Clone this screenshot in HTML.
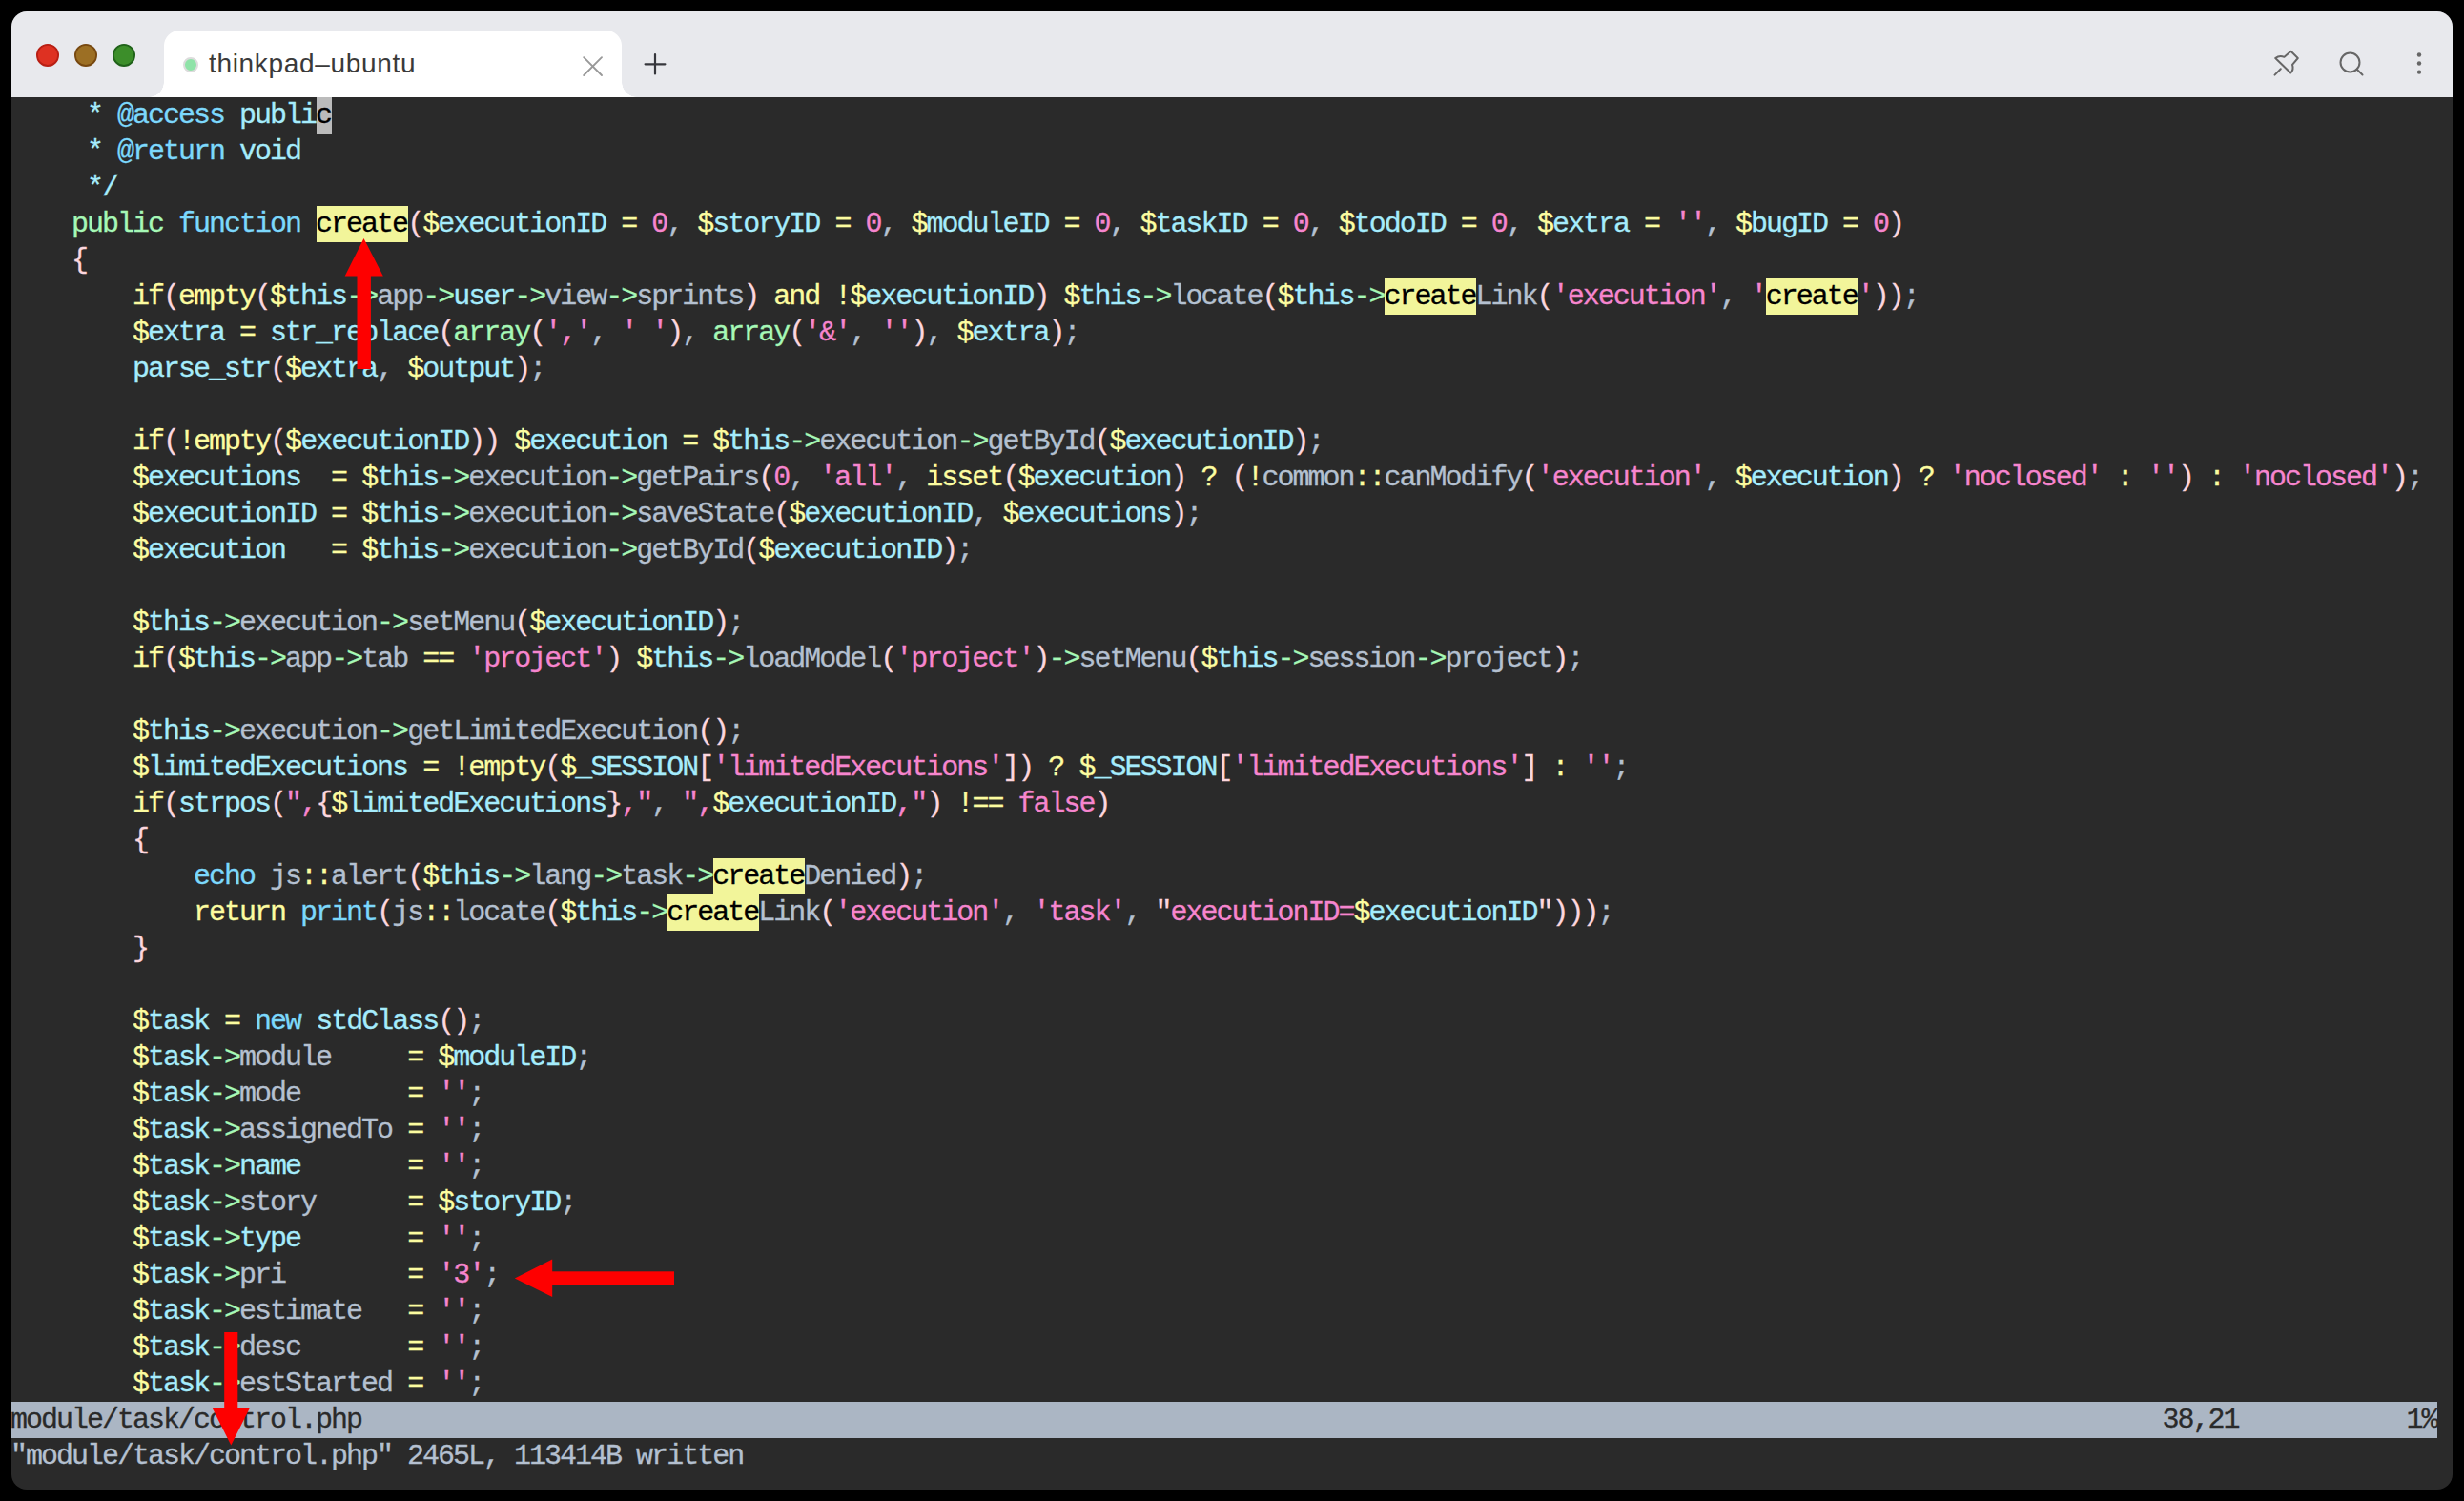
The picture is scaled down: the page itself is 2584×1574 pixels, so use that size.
<!DOCTYPE html>
<html><head><meta charset="utf-8"><style>
html,body{margin:0;padding:0;}
body{width:2584px;height:1574px;background:#000;overflow:hidden;position:relative;}
.win{position:absolute;left:12px;top:12px;width:2560px;height:1550px;border-radius:16px;overflow:hidden;background:#2a2a2a;}
.tb{position:absolute;left:0;top:0;width:2560px;height:90px;background:#e8e9ed;}
.tab{position:absolute;left:160px;top:20px;width:480px;height:70px;background:#fff;border-radius:16px 16px 0 0;}
.tab:before,.tab:after{content:"";position:absolute;bottom:0;width:16px;height:16px;}
.tab:before{left:-16px;background:radial-gradient(circle at 0 0,transparent 15.5px,#fff 16px);}
.tab:after{right:-16px;background:radial-gradient(circle at 100% 0,transparent 15.5px,#fff 16px);}
.gdot{position:absolute;left:20px;top:27.8px;width:12px;height:12px;border-radius:50%;background:#8fe3a8;border:2px solid #dcdcdc;}
.ttl{position:absolute;left:47px;top:15.2px;font:28px/40px "Liberation Sans",sans-serif;color:#3a3a3a;white-space:pre;letter-spacing:0.68px;}
.code{position:absolute;left:0;top:90px;width:2560px;height:1460px;}
.ln,.sl,.cl{position:absolute;left:-1px;height:38px;white-space:pre;font-family:"Liberation Mono",monospace;font-size:30px;line-height:38px;letter-spacing:-2px;color:#c8ccd4;-webkit-text-stroke:0.3px currentColor;}
.hl{position:absolute;height:38px;background:#f2f59a;}
.cur{position:absolute;height:38px;background:#bbbbbb;}
i{font-style:normal;}
.y{color:#fcfca0}
.c{color:#a5ecfc}
.b{color:#7cd8fc}
.g{color:#a6f8b6}
.p{color:#fcd6de}
.m{color:#f685ce}
.s{color:#b4c0d0}
.k{color:#a5ecfc}
.H{color:#000}
.K{color:#000}
.status{position:absolute;left:0;top:1368px;width:2544px;height:38px;background:#abb6c4;}
.sl{top:1368px;color:#2a2a2a;}
.cl{top:1406px;color:#b4c0d0;}
.arrow{position:absolute;left:0;top:0;}

</style></head><body>
<div class="win">
 <div class="tb">
  <svg style="position:absolute;left:0;top:0" width="140" height="90" viewBox="0 0 140 90"><circle cx="38" cy="45.9" r="11.1" fill="#de3122" stroke="#b81f14" stroke-width="1.8"/><circle cx="78" cy="45.9" r="11.1" fill="#9c6f24" stroke="#774810" stroke-width="1.8"/><circle cx="118" cy="45.9" r="11.1" fill="#3c8e2a" stroke="#20621a" stroke-width="1.8"/></svg>
  <div class="tab"><div class="gdot"></div><div class="ttl">thinkpad–ubuntu</div>
   <svg style="position:absolute;left:437.5px;top:26px" width="24" height="24" viewBox="0 0 24 24"><path d="M2.2 2.2L21 21M21 2.2L2.2 21" stroke="#999" stroke-width="1.9" stroke-linecap="round" fill="none"/></svg>
  </div>
  <svg style="position:absolute;left:662px;top:42px" width="26" height="26" viewBox="0 0 26 26"><path d="M13 3V23.5M2.6 13.3H23.4" stroke="#36373c" stroke-width="2.2" stroke-linecap="round" fill="none"/></svg>
  <svg style="position:absolute;left:2370px;top:38px" width="32" height="32" viewBox="0 0 32 32"><path d="M20.5 3.8L27.8 11L22 17.8C23.2 21 22.4 24.2 20.2 26.5L4.2 11C7 8.8 10.5 8.5 13.5 9.8Z M9.8 22.2L3.5 28.6" stroke="#666" stroke-width="2" stroke-linejoin="round" stroke-linecap="round" fill="none"/></svg>
  <svg style="position:absolute;left:2436px;top:38px" width="32" height="32" viewBox="0 0 32 32"><circle cx="16.5" cy="15.5" r="10" stroke="#666" stroke-width="2" fill="none"/><path d="M23.5 22.5L29.5 28.5" stroke="#666" stroke-width="2" stroke-linecap="round"/></svg>
  <svg style="position:absolute;left:2515px;top:40px" width="20" height="40" viewBox="0 0 20 40"><circle cx="10" cy="5.5" r="2.2" fill="#666"/><circle cx="10" cy="14.5" r="2.2" fill="#666"/><circle cx="10" cy="23.6" r="2.2" fill="#666"/></svg>
 </div>
 <div class="code">
<div class="cur" style="left:320px;top:0px;width:16px"></div>
<div class="hl" style="left:320px;top:114px;width:96px"></div>
<div class="hl" style="left:1440px;top:190px;width:96px"></div>
<div class="hl" style="left:1840px;top:190px;width:96px"></div>
<div class="hl" style="left:736px;top:798px;width:96px"></div>
<div class="hl" style="left:688px;top:836px;width:96px"></div>
<div class="ln" style="top:0px">     <i class="k">* </i><i class="b">@access</i><i class="k"> publi</i><i class="K">c</i></div>
<div class="ln" style="top:38px">     <i class="k">* </i><i class="b">@return</i><i class="k"> void</i></div>
<div class="ln" style="top:76px">     <i class="k">*/</i></div>
<div class="ln" style="top:114px">    <i class="g">public</i> <i class="b">function</i> <i class="H">create</i><i class="p">(</i><i class="y">$</i><i class="c">executionID</i> <i class="y">=</i> <i class="m">0</i><i class="s">,</i> <i class="y">$</i><i class="c">storyID</i> <i class="y">=</i> <i class="m">0</i><i class="s">,</i> <i class="y">$</i><i class="c">moduleID</i> <i class="y">=</i> <i class="m">0</i><i class="s">,</i> <i class="y">$</i><i class="c">taskID</i> <i class="y">=</i> <i class="m">0</i><i class="s">,</i> <i class="y">$</i><i class="c">todoID</i> <i class="y">=</i> <i class="m">0</i><i class="s">,</i> <i class="y">$</i><i class="c">extra</i> <i class="y">=</i> <i class="m">&#x27;&#x27;</i><i class="s">,</i> <i class="y">$</i><i class="c">bugID</i> <i class="y">=</i> <i class="m">0</i><i class="p">)</i></div>
<div class="ln" style="top:152px">    <i class="p">{</i></div>
<div class="ln" style="top:190px">        <i class="y">if</i><i class="p">(</i><i class="y">empty</i><i class="p">(</i><i class="y">$</i><i class="c">this</i><i class="g">-&gt;</i><i class="s">app</i><i class="g">-&gt;</i><i class="c">user</i><i class="g">-&gt;</i><i class="s">view</i><i class="g">-&gt;</i><i class="s">sprints</i><i class="p">)</i> <i class="y">and</i> <i class="y">!$</i><i class="c">executionID</i><i class="p">)</i> <i class="y">$</i><i class="c">this</i><i class="g">-&gt;</i><i class="s">locate</i><i class="p">(</i><i class="y">$</i><i class="c">this</i><i class="g">-&gt;</i><i class="H">create</i><i class="s">Link</i><i class="p">(</i><i class="m">&#x27;execution&#x27;</i><i class="s">,</i> <i class="m">&#x27;</i><i class="H">create</i><i class="m">&#x27;</i><i class="p">))</i><i class="s">;</i></div>
<div class="ln" style="top:228px">        <i class="y">$</i><i class="c">extra</i> <i class="y">=</i> <i class="c">str_replace</i><i class="p">(</i><i class="g">array</i><i class="p">(</i><i class="m">&#x27;,&#x27;</i><i class="s">,</i> <i class="m">&#x27; &#x27;</i><i class="p">)</i><i class="s">,</i> <i class="g">array</i><i class="p">(</i><i class="m">&#x27;&amp;&#x27;</i><i class="s">,</i> <i class="m">&#x27;&#x27;</i><i class="p">)</i><i class="s">,</i> <i class="y">$</i><i class="c">extra</i><i class="p">)</i><i class="s">;</i></div>
<div class="ln" style="top:266px">        <i class="c">parse_str</i><i class="p">(</i><i class="y">$</i><i class="c">extra</i><i class="s">,</i> <i class="y">$</i><i class="c">output</i><i class="p">)</i><i class="s">;</i></div>
<div class="ln" style="top:304px"></div>
<div class="ln" style="top:342px">        <i class="y">if</i><i class="p">(</i><i class="y">!empty</i><i class="p">(</i><i class="y">$</i><i class="c">executionID</i><i class="p">))</i> <i class="y">$</i><i class="c">execution</i> <i class="y">=</i> <i class="y">$</i><i class="c">this</i><i class="g">-&gt;</i><i class="s">execution</i><i class="g">-&gt;</i><i class="s">getById</i><i class="p">(</i><i class="y">$</i><i class="c">executionID</i><i class="p">)</i><i class="s">;</i></div>
<div class="ln" style="top:380px">        <i class="y">$</i><i class="c">executions</i>  <i class="y">=</i> <i class="y">$</i><i class="c">this</i><i class="g">-&gt;</i><i class="s">execution</i><i class="g">-&gt;</i><i class="s">getPairs</i><i class="p">(</i><i class="m">0</i><i class="s">,</i> <i class="m">&#x27;all&#x27;</i><i class="s">,</i> <i class="y">isset</i><i class="p">(</i><i class="y">$</i><i class="c">execution</i><i class="p">)</i> <i class="y">?</i> <i class="p">(</i><i class="y">!</i><i class="s">common</i><i class="y">::</i><i class="s">canModify</i><i class="p">(</i><i class="m">&#x27;execution&#x27;</i><i class="s">,</i> <i class="y">$</i><i class="c">execution</i><i class="p">)</i> <i class="y">?</i> <i class="m">&#x27;noclosed&#x27;</i> <i class="y">:</i> <i class="m">&#x27;&#x27;</i><i class="p">)</i> <i class="y">:</i> <i class="m">&#x27;noclosed&#x27;</i><i class="p">)</i><i class="s">;</i></div>
<div class="ln" style="top:418px">        <i class="y">$</i><i class="c">executionID</i> <i class="y">=</i> <i class="y">$</i><i class="c">this</i><i class="g">-&gt;</i><i class="s">execution</i><i class="g">-&gt;</i><i class="s">saveState</i><i class="p">(</i><i class="y">$</i><i class="c">executionID</i><i class="s">,</i> <i class="y">$</i><i class="c">executions</i><i class="p">)</i><i class="s">;</i></div>
<div class="ln" style="top:456px">        <i class="y">$</i><i class="c">execution</i>   <i class="y">=</i> <i class="y">$</i><i class="c">this</i><i class="g">-&gt;</i><i class="s">execution</i><i class="g">-&gt;</i><i class="s">getById</i><i class="p">(</i><i class="y">$</i><i class="c">executionID</i><i class="p">)</i><i class="s">;</i></div>
<div class="ln" style="top:494px"></div>
<div class="ln" style="top:532px">        <i class="y">$</i><i class="c">this</i><i class="g">-&gt;</i><i class="s">execution</i><i class="g">-&gt;</i><i class="s">setMenu</i><i class="p">(</i><i class="y">$</i><i class="c">executionID</i><i class="p">)</i><i class="s">;</i></div>
<div class="ln" style="top:570px">        <i class="y">if</i><i class="p">(</i><i class="y">$</i><i class="c">this</i><i class="g">-&gt;</i><i class="s">app</i><i class="g">-&gt;</i><i class="s">tab</i> <i class="y">==</i> <i class="m">&#x27;project&#x27;</i><i class="p">)</i> <i class="y">$</i><i class="c">this</i><i class="g">-&gt;</i><i class="s">loadModel</i><i class="p">(</i><i class="m">&#x27;project&#x27;</i><i class="p">)</i><i class="g">-&gt;</i><i class="s">setMenu</i><i class="p">(</i><i class="y">$</i><i class="c">this</i><i class="g">-&gt;</i><i class="s">session</i><i class="g">-&gt;</i><i class="s">project</i><i class="p">)</i><i class="s">;</i></div>
<div class="ln" style="top:608px"></div>
<div class="ln" style="top:646px">        <i class="y">$</i><i class="c">this</i><i class="g">-&gt;</i><i class="s">execution</i><i class="g">-&gt;</i><i class="s">getLimitedExecution</i><i class="p">()</i><i class="s">;</i></div>
<div class="ln" style="top:684px">        <i class="y">$</i><i class="c">limitedExecutions</i> <i class="y">=</i> <i class="y">!empty</i><i class="p">(</i><i class="y">$</i><i class="c">_SESSION</i><i class="p">[</i><i class="m">&#x27;limitedExecutions&#x27;</i><i class="p">])</i> <i class="y">?</i> <i class="y">$</i><i class="c">_SESSION</i><i class="p">[</i><i class="m">&#x27;limitedExecutions&#x27;</i><i class="p">]</i> <i class="y">:</i> <i class="m">&#x27;&#x27;</i><i class="s">;</i></div>
<div class="ln" style="top:722px">        <i class="y">if</i><i class="p">(</i><i class="c">strpos</i><i class="p">(</i><i class="m">&quot;,</i><i class="p">{</i><i class="y">$</i><i class="c">limitedExecutions</i><i class="p">}</i><i class="m">,&quot;</i><i class="s">,</i> <i class="m">&quot;,</i><i class="y">$</i><i class="c">executionID</i><i class="m">,&quot;</i><i class="p">)</i> <i class="y">!==</i> <i class="m">false</i><i class="p">)</i></div>
<div class="ln" style="top:760px">        <i class="p">{</i></div>
<div class="ln" style="top:798px">            <i class="b">echo</i> <i class="s">js</i><i class="y">::</i><i class="s">alert</i><i class="p">(</i><i class="y">$</i><i class="c">this</i><i class="g">-&gt;</i><i class="s">lang</i><i class="g">-&gt;</i><i class="s">task</i><i class="g">-&gt;</i><i class="H">create</i><i class="s">Denied</i><i class="p">)</i><i class="s">;</i></div>
<div class="ln" style="top:836px">            <i class="y">return</i> <i class="b">print</i><i class="p">(</i><i class="s">js</i><i class="y">::</i><i class="s">locate</i><i class="p">(</i><i class="y">$</i><i class="c">this</i><i class="g">-&gt;</i><i class="H">create</i><i class="s">Link</i><i class="p">(</i><i class="m">&#x27;execution&#x27;</i><i class="s">,</i> <i class="m">&#x27;task&#x27;</i><i class="s">,</i> <i class="p">&quot;</i><i class="m">executionID=</i><i class="y">$</i><i class="c">executionID</i><i class="p">&quot;)))</i><i class="s">;</i></div>
<div class="ln" style="top:874px">        <i class="p">}</i></div>
<div class="ln" style="top:912px"></div>
<div class="ln" style="top:950px">        <i class="y">$</i><i class="c">task</i> <i class="y">=</i> <i class="b">new</i> <i class="c">stdClass</i><i class="p">()</i><i class="s">;</i></div>
<div class="ln" style="top:988px">        <i class="y">$</i><i class="c">task</i><i class="g">-&gt;</i><i class="s">module</i>     <i class="y">=</i> <i class="y">$</i><i class="c">moduleID</i><i class="s">;</i></div>
<div class="ln" style="top:1026px">        <i class="y">$</i><i class="c">task</i><i class="g">-&gt;</i><i class="s">mode</i>       <i class="y">=</i> <i class="m">&#x27;&#x27;</i><i class="s">;</i></div>
<div class="ln" style="top:1064px">        <i class="y">$</i><i class="c">task</i><i class="g">-&gt;</i><i class="s">assignedTo</i> <i class="y">=</i> <i class="m">&#x27;&#x27;</i><i class="s">;</i></div>
<div class="ln" style="top:1102px">        <i class="y">$</i><i class="c">task</i><i class="g">-&gt;</i><i class="c">name</i>       <i class="y">=</i> <i class="m">&#x27;&#x27;</i><i class="s">;</i></div>
<div class="ln" style="top:1140px">        <i class="y">$</i><i class="c">task</i><i class="g">-&gt;</i><i class="s">story</i>      <i class="y">=</i> <i class="y">$</i><i class="c">storyID</i><i class="s">;</i></div>
<div class="ln" style="top:1178px">        <i class="y">$</i><i class="c">task</i><i class="g">-&gt;</i><i class="c">type</i>       <i class="y">=</i> <i class="m">&#x27;&#x27;</i><i class="s">;</i></div>
<div class="ln" style="top:1216px">        <i class="y">$</i><i class="c">task</i><i class="g">-&gt;</i><i class="s">pri</i>        <i class="y">=</i> <i class="m">&#x27;3&#x27;</i><i class="s">;</i></div>
<div class="ln" style="top:1254px">        <i class="y">$</i><i class="c">task</i><i class="g">-&gt;</i><i class="s">estimate</i>   <i class="y">=</i> <i class="m">&#x27;&#x27;</i><i class="s">;</i></div>
<div class="ln" style="top:1292px">        <i class="y">$</i><i class="c">task</i><i class="g">-&gt;</i><i class="s">desc</i>       <i class="y">=</i> <i class="m">&#x27;&#x27;</i><i class="s">;</i></div>
<div class="ln" style="top:1330px">        <i class="y">$</i><i class="c">task</i><i class="g">-&gt;</i><i class="s">estStarted</i> <i class="y">=</i> <i class="m">&#x27;&#x27;</i><i class="s">;</i></div>
  <div class="status"></div>
  <div class="sl">module/task/control.php                                                                                                                      38,21           1%</div>
  <div class="cl">"module/task/control.php" 2465L, 113414B written</div>
 </div>
 <svg class="arrow" width="2560" height="1550" viewBox="0 0 2560 1550">
  <g fill="#fe0000">
   <polygon points="369.5,238 349.7,277.5 389.8,277.5"/>
   <rect x="362.5" y="277" width="14.4" height="98"/>
   <polygon points="527.8,1328.6 567.2,1308.6 567.2,1348"/>
   <rect x="567" y="1321.3" width="128" height="14.1"/>
   <rect x="223.2" y="1385" width="14.1" height="80"/>
   <polygon points="210.4,1464 250.2,1464 230.3,1503.5"/>
  </g>
 </svg>
</div>

</body></html>
